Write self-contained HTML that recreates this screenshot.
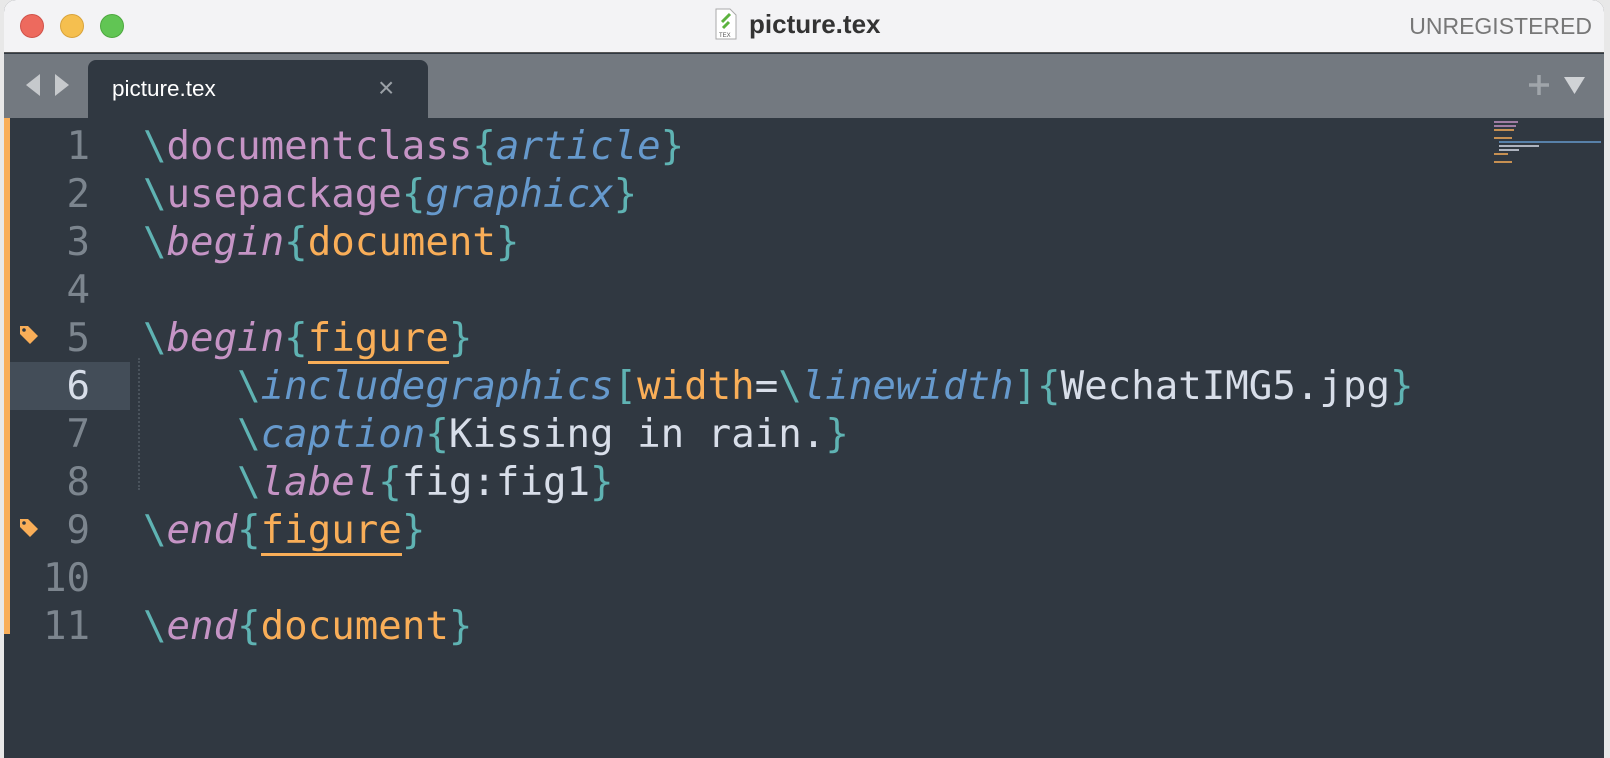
<!DOCTYPE html>
<html><head><meta charset="utf-8"><style>
*{margin:0;padding:0;box-sizing:border-box}
body{width:1610px;height:758px;overflow:hidden;background:#e8e8e8;position:relative;font-family:"Liberation Sans",sans-serif}
.win{position:absolute;left:4px;top:0;width:1600px;height:758px;background:#303841;border-radius:12px 12px 0 0;overflow:hidden}
.title{position:absolute;left:0;top:0;width:100%;height:53px;background:#f3f3f5;border-bottom:1px solid #555}
.dot{position:absolute;top:14px;width:24px;height:24px;border-radius:50%}
.tabbar{position:absolute;left:0;top:54px;width:100%;height:64px;background:#737980}
.tab{position:absolute;left:84px;top:6px;width:340px;height:58px;background:#303841;border-radius:8px 8px 0 0}
.code{position:absolute;left:0;top:123px;width:100%;font-family:"DejaVu Sans Mono","Liberation Mono",monospace;font-size:39.1px}
.ln{position:absolute;height:48px;line-height:48px;white-space:pre}
.num{position:absolute;left:0;width:86px;text-align:right;color:#7c858e;height:48px;line-height:48px}
.t{color:#5fb3b3}.p{color:#c594c5}.b{color:#6699cc}.o{color:#f9ae58}.w{color:#d8dee9}.i{font-style:italic}
.u{border-bottom:3px solid #f9ae58}
</style></head><body>
<div class="win">
<div class="title">
<div class="dot" style="left:16px;background:#ed6a5e;border:1px solid #d0524a"></div>
<div class="dot" style="left:56px;background:#f5bf4f;border:1px solid #d9a33b"></div>
<div class="dot" style="left:96px;background:#61c554;border:1px solid #4da83f"></div>
<svg style="position:absolute;left:710px;top:8px" width="24" height="32" viewBox="0 0 24 32"><path d="M2 1h14l6 6v24H2z" fill="#fff" stroke="#aaa"/><path d="M8 14l8-8M9 20l6-6" stroke="#5cb33e" stroke-width="3"/><text x="5" y="29" font-size="6" fill="#555" font-family="Liberation Sans">TEX</text></svg>
<div style="position:absolute;left:745px;top:9px;font-size:26px;font-weight:bold;color:#333">picture.tex</div>
<div style="position:absolute;right:12px;top:13px;font-size:23px;color:#777">UNREGISTERED</div>
</div>
<div class="tabbar">
<svg style="position:absolute;left:18px;top:18px" width="54" height="26"><path d="M18 2L4 13l14 11z" fill="#c6c9cc"/><path d="M33 2l14 11-14 11z" fill="#c6c9cc"/></svg>
<div class="tab"><div style="position:absolute;left:24px;top:16px;font-size:22.5px;color:#fff">picture.tex</div>
<div style="position:absolute;left:290px;top:12px;font-size:28px;color:#9aa0a6">×</div></div>
<svg style="position:absolute;left:1522px;top:18px" width="70" height="30"><path d="M13 3v20M3 13h20" stroke="#a0a5aa" stroke-width="3.5"/><path d="M38 5h21l-10.5 17z" fill="#d0d3d6"/></svg>
</div>
<div style="position:absolute;left:0;top:118px;width:6px;height:516px;background:#f9ae58"></div>
<div style="position:absolute;left:6px;top:362px;width:120px;height:48px;background:#434d58"></div>
<div style="position:absolute;left:134px;top:358px;height:132px;border-left:2px dotted #4a535c"></div>
<svg style="position:absolute;left:1490px;top:120px" width="110" height="50"><g stroke-width="1.5"><path d="M0 2h24" stroke="#c594c5"/><path d="M0 6h22" stroke="#c594c5"/><path d="M0 10h20" stroke="#f9ae58"/><path d="M0 18h18" stroke="#f9ae58"/><path d="M5 22h102" stroke="#6699cc"/><path d="M5 26h40" stroke="#d8dee9"/><path d="M5 30h20" stroke="#d8dee9"/><path d="M0 34h14" stroke="#f9ae58"/><path d="M0 42h18" stroke="#f9ae58"/></g></svg>
<div class="code">
<div class="num" style="top:0">1</div><div class="ln" style="left:139px;top:0"><span class="t">\</span><span class="p">documentclass</span><span class="t">{</span><span class="b i">article</span><span class="t">}</span></div>
<div class="num" style="top:48px">2</div><div class="ln" style="left:139px;top:48px"><span class="t">\</span><span class="p">usepackage</span><span class="t">{</span><span class="b i">graphicx</span><span class="t">}</span></div>
<div class="num" style="top:96px">3</div><div class="ln" style="left:139px;top:96px"><span class="t">\</span><span class="p i">begin</span><span class="t">{</span><span class="o">document</span><span class="t">}</span></div>
<div class="num" style="top:144px">4</div>
<div class="num" style="top:192px">5</div><div class="ln" style="left:139px;top:192px"><span class="t">\</span><span class="p i">begin</span><span class="t">{</span><span class="o u">figure</span><span class="t">}</span></div>
<div class="num" style="top:240px;color:#d8dee9">6</div><div class="ln" style="left:139px;top:240px">    <span class="t">\</span><span class="b i">includegraphics</span><span class="t">[</span><span class="o">width</span><span class="w">=</span><span class="t">\</span><span class="b i">linewidth</span><span class="t">]{</span><span class="w">WechatIMG5.jpg</span><span class="t">}</span></div>
<div class="num" style="top:288px">7</div><div class="ln" style="left:139px;top:288px">    <span class="t">\</span><span class="b i">caption</span><span class="t">{</span><span class="w">Kissing in rain.</span><span class="t">}</span></div>
<div class="num" style="top:336px">8</div><div class="ln" style="left:139px;top:336px">    <span class="t">\</span><span class="p i">label</span><span class="t">{</span><span class="w">fig:fig1</span><span class="t">}</span></div>
<div class="num" style="top:384px">9</div><div class="ln" style="left:139px;top:384px"><span class="t">\</span><span class="p i">end</span><span class="t">{</span><span class="o u">figure</span><span class="t">}</span></div>
<div class="num" style="top:432px">10</div>
<div class="num" style="top:480px">11</div><div class="ln" style="left:139px;top:480px"><span class="t">\</span><span class="p i">end</span><span class="t">{</span><span class="o">document</span><span class="t">}</span></div>
</div>
<svg style="position:absolute;left:14px;top:324px" width="22" height="22"><path d="M2 2h8l10 10-8 8L2 10z" fill="#f9ae58"/><circle cx="6" cy="6" r="1.8" fill="#303841"/></svg>
<svg style="position:absolute;left:14px;top:517px" width="22" height="22"><path d="M2 2h8l10 10-8 8L2 10z" fill="#f9ae58"/><circle cx="6" cy="6" r="1.8" fill="#303841"/></svg>
</div>
</body></html>
